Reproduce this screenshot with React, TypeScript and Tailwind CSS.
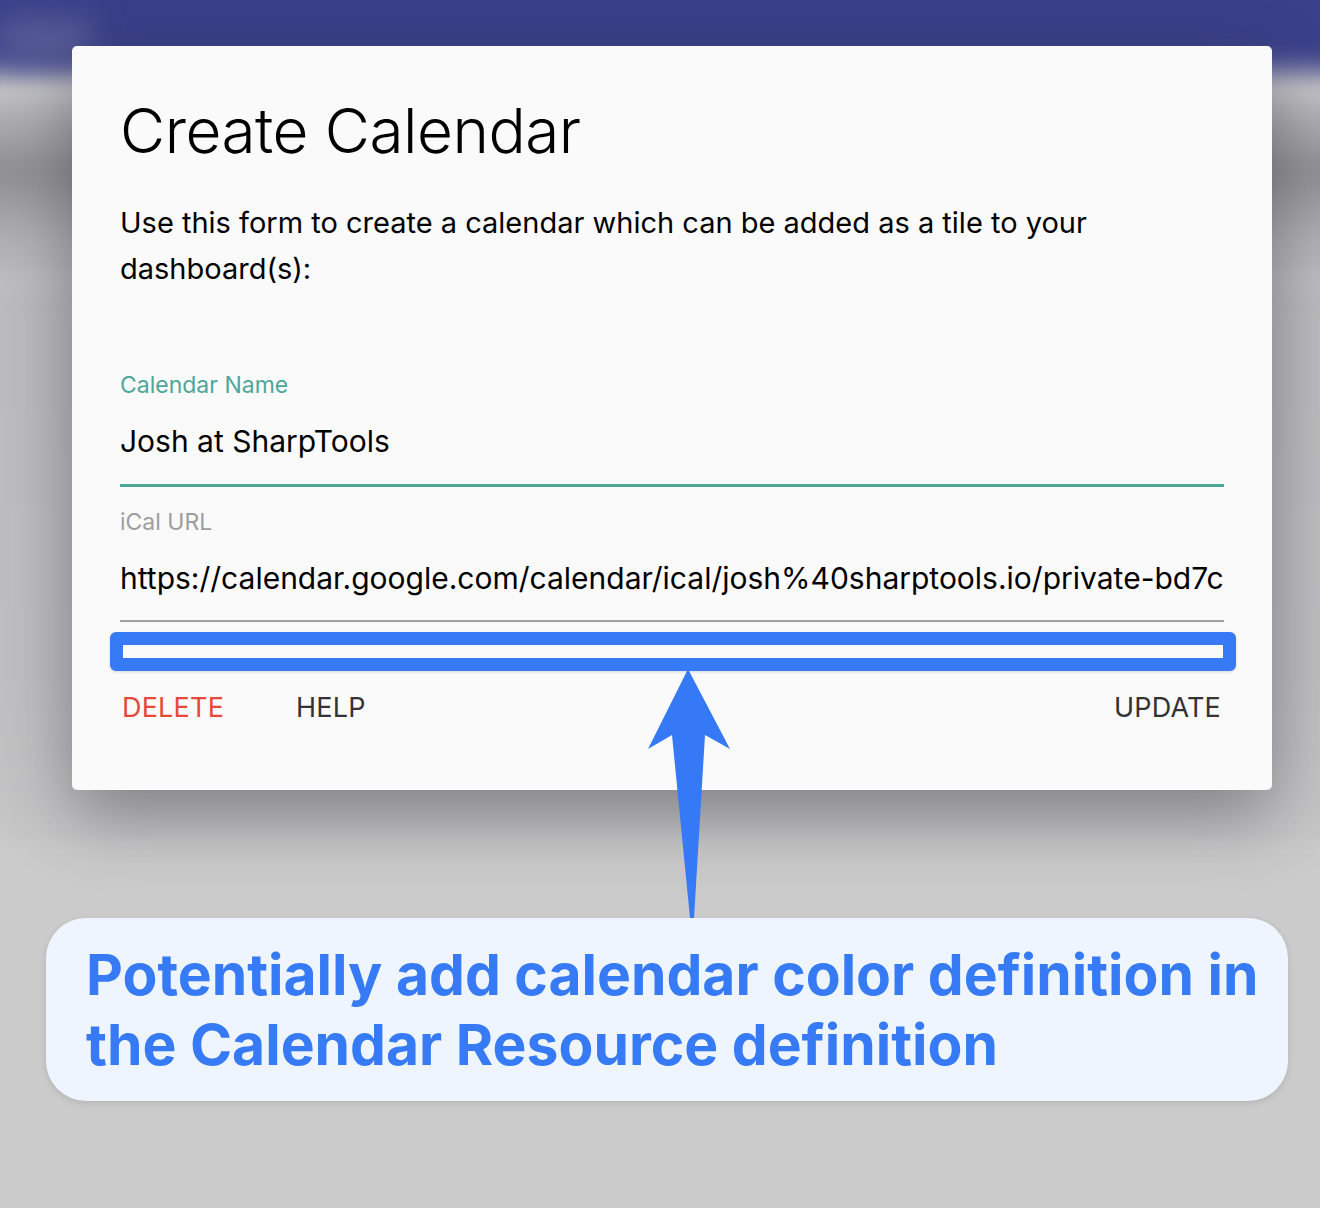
import React from "react";

const sans = "font-['Inter','Noto_Sans',sans-serif]";

function Backdrop() {
  // blurred page behind the dialog
  return (
    <div className="absolute inset-0 overflow-hidden bg-[#cbcbcb]">
      <div className="absolute -left-10 -right-10 -top-10 h-[112px] bg-[#3a4089] blur-[14px]" />
      <div className="absolute left-0 top-[20px] h-[40px] w-[90px] bg-[#5a5f98] blur-[16px]" />
      <div className="absolute -left-10 -right-10 top-[95px] h-[190px] bg-[linear-gradient(180deg,#bdbdc1_0%,#8f8f93_40%,#b0b0b4_75%,#bebec1_100%)] blur-[10px]" />
      <div className="absolute -left-10 -right-10 top-[280px] h-[560px] bg-[linear-gradient(180deg,#bcbcbf_0%,#c0c0c2_70%,#c6c6c7_100%)] blur-[10px]" />
    </div>
  );
}

function Field({
  label,
  value,
  focused,
}: {
  label: string;
  value: string;
  focused?: boolean;
}) {
  return (
    <div className="w-[1104px]">
      <div className={`text-[23px] leading-[28px] ${focused ? "text-[#4ea699]" : "text-[#9e9e9e]"}`}>{label}</div>
      <div className="mt-[22px] overflow-hidden whitespace-nowrap text-[30px] leading-[40px] text-black">{value}</div>
      <div className={focused ? "mt-[23px] h-[3px] bg-[#4ea699]" : "mt-[22px] h-[2px] bg-[#a0a0a0]"} />
    </div>
  );
}

export default function App() {
  return (
    <div className={`relative h-[1208px] w-[1320px] overflow-hidden ${sans}`}>
      <Backdrop />

      <div className="relative flex flex-col pt-[46px]">
        <div className="ml-[72px] h-[744px] w-[1200px] rounded-[5px] bg-[#fafafa] pl-[48px] pt-[51px] shadow-[0_24px_70px_rgba(40,40,50,0.45)]">
          <h1 className="text-[62px] font-light leading-[67px] tracking-[-0.5px] text-black">Create Calendar</h1>
          <p className="mt-[36px] w-[1000px] text-[29px] leading-[46px] text-black">
            Use this form to create a calendar which can be added as a tile to your dashboard(s):
          </p>

          <div className="mt-[79px]">
            <Field label="Calendar Name" value="Josh at SharpTools" focused />
          </div>
          <div className="mt-[21px]">
            <Field
              label="iCal URL"
              value="https://calendar.google.com/calendar/ical/josh%40sharptools.io/private-bd7c0f2e9a1b4d6e8f/basic.ics"
            />
          </div>

          {/* highlighted slot for a future colour field */}
          <div className="-ml-[10px] mt-[10px] h-[39px] w-[1126px] rounded-[6px] border-[13px] border-[#367bf5] bg-[#fafafa] shadow-[0_1px_3px_rgba(0,0,0,0.15)]" />

          <div className="mt-[21px] flex w-[1104px] items-center text-[27px] leading-[32px] tracking-[0.2px]">
            <span className="ml-[2px] text-[#e5493a]">DELETE</span>
            <span className="ml-[72px] text-[#333333]">HELP</span>
            <span className="ml-auto mr-[3px] text-[#333333]">UPDATE</span>
          </div>
        </div>

        <div className="ml-[46px] mt-[128px] h-[183px] w-[1242px] rounded-[40px] bg-[#eff5fe] pl-[40px] pr-[20px] pt-[22px] shadow-[0_2px_6px_rgba(0,0,0,0.12)]">
          <p className="text-[57px] font-bold leading-[70px] text-[#367bf5]">
            Potentially add calendar color definition in the Calendar Resource definition
          </p>
        </div>
      </div>

      {/* pointer from the callout up to the slot */}
      <svg className="absolute left-0 top-0" width="1320" height="1208" viewBox="0 0 1320 1208">
        <polygon
          points="688,669 730,749 705,735 694,918 690,918 672,735 648,749"
          fill="#3579f6"
        />
      </svg>
    </div>
  );
}
